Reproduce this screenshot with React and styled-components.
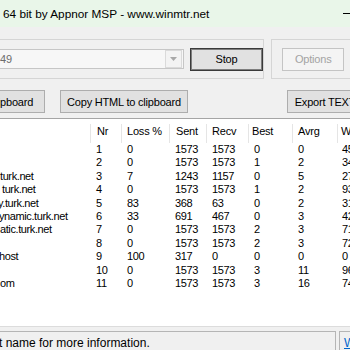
import React from 'react';
import styled, { createGlobalStyle } from 'styled-components';

const GlobalStyle = createGlobalStyle`
  html, body {
    margin: 0;
    padding: 0;
    background: #f0f0f0;
  }
  body {
    width: 350px;
    height: 350px;
    overflow: hidden;
  }
`;

const Window = styled.div`
  width: 350px;
  height: 350px;
  overflow: hidden;
  display: flex;
  flex-direction: column;
  background: #f0f0f0;
  font-family: "Liberation Sans", Arial, sans-serif;
  font-size: 11px;
  color: #000;
`;

const TitleBar = styled.div`
  flex: none;
  height: 27px;
  padding-left: 3px;
  display: flex;
  align-items: center;
  justify-content: space-between;
  background: #e9f6e9;
  font-family: "Liberation Sans", Arial, sans-serif;
  font-size: 11.8px;
  color: #000;
`;

const Minimize = styled.span`
  width: 10px;
  height: 1px;
  margin-right: -3px;
  background: #000;
`;

const TopRow = styled.div`
  flex: none;
  display: flex;
  gap: 7px;
  margin-top: 12px;
`;

const GroupBox = styled.div`
  box-sizing: border-box;
  height: 40px;
  display: flex;
  align-items: center;
  gap: 6px;
  border: 1px solid #d5d5d5;
  border-left: ${p => (p.$open === 'left' ? 'none' : '1px solid #d5d5d5')};
  border-right: ${p => (p.$open === 'right' ? 'none' : '1px solid #d5d5d5')};
  width: ${p => p.$width}px;
  padding-left: ${p => p.$padLeft || 0}px;
`;

const Combo = styled.div`
  box-sizing: border-box;
  width: 184px;
  height: 20px;
  display: flex;
  align-items: center;
  justify-content: space-between;
  border: 1px solid #c6c6c6;
  border-left: none;
  background: #f7f7f7;
  color: #6d6d6d;
  padding-right: 1px;
`;

const ComboArrow = styled.div`
  box-sizing: border-box;
  width: 17px;
  height: 18px;
  display: flex;
  align-items: center;
  justify-content: center;
  border: 1px solid #dadada;
  background: #f3f3f3;
`;

const Button = styled.div`
  box-sizing: border-box;
  flex: none;
  height: 23px;
  width: ${p => p.$width}px;
  margin-left: ${p => p.$shift || 0}px;
  display: flex;
  align-items: center;
  justify-content: center;
  white-space: nowrap;
  letter-spacing: -0.2px;
  background: ${p => (p.$disabled ? '#f4f4f4' : '#e1e1e1')};
  color: ${p => (p.$disabled ? '#a3a3a3' : '#000')};
  border: 1px solid ${p => (p.$default ? '#3a3a3a' : p.$disabled ? '#c4c4c4' : '#adadad')};
  box-shadow: ${p => (p.$default ? 'inset 0 0 0 1px #7d7d7d' : 'none')};
`;

const ButtonRow = styled.div`
  flex: none;
  display: flex;
  gap: 15px;
  margin-top: 11px;
`;

const ListView = styled.div`
  flex: 1;
  margin-top: 5px;
  background: #fff;
  border-top: 1px solid #a5a5a5;
  border-bottom: 1px solid #dcdcdc;
  overflow: hidden;
  letter-spacing: -0.4px;
`;

const Grid = styled.div`
  display: grid;
  grid-template-columns: 91px 31px 48px 37px 42px 44px 45px 60px;
  height: ${p => (p.$header ? '24px' : '13.4px')};
  line-height: 13.4px;
  white-space: nowrap;
`;

const HeadCell = styled.div`
  display: flex;
  align-items: center;
  padding-top: 2px;
  padding-left: ${p => p.$pad}px;
  letter-spacing: -0.2px;
  background: linear-gradient(#e5e5e5, #e5e5e5) right 5px / 1px calc(100% - 5px) no-repeat;
`;

const Cell = styled.div`
  padding-left: ${p => p.$pad || 5}px;
  overflow: hidden;
`;

const HostCell = styled.div`
  overflow: hidden;
`;

const HostText = styled.span`
  display: inline-block;
  margin-left: ${p => p.$shift}px;
`;

const StatusBar = styled.div`
  flex: none;
  height: 23px;
  box-sizing: border-box;
  padding-top: 4px;
  display: flex;
  gap: 3px;
  font-size: 12px;
`;

const StatusPanel = styled.div`
  box-sizing: border-box;
  width: ${p => p.$width}px;
  flex: none;
  padding-top: 4px;
  border-top: 1px solid #b5b5b5;
  border-left: ${p => (p.$first ? 'none' : '1px solid #b5b5b5')};
  border-right: 1px solid #b5b5b5;
  white-space: nowrap;
  overflow: hidden;
`;

const StatusText = styled.span`
  display: inline-block;
  margin-left: -1px;
`;

const Link = styled.span`
  display: inline-block;
  margin-left: 4px;
  color: #0066cc;
  text-decoration: underline;
`;

const columns = [
  { label: 'Nr', pad: 6 },
  { label: 'Loss %', pad: 5 },
  { label: 'Sent', pad: 6 },
  { label: 'Recv', pad: 5 },
  { label: 'Best', pad: 3 },
  { label: 'Avrg', pad: 5 },
  { label: 'Wrst', pad: 3 },
];

const rows = [
  { host: '', shift: 0, v: [1, 0, 1573, 1573, 0, 0, 45] },
  { host: '', shift: 0, v: [2, 0, 1573, 1573, 1, 2, 34] },
  { host: 'turk.net', shift: 0, v: [3, 7, 1243, 1157, 0, 5, 27] },
  { host: 'turk.net', shift: 2, v: [4, 0, 1573, 1573, 1, 2, 93] },
  { host: 'y.turk.net', shift: -2, v: [5, 83, 368, 63, 0, 2, 31] },
  { host: 'ynamic.turk.net', shift: -1, v: [6, 33, 691, 467, 0, 3, 42] },
  { host: 'atic.turk.net', shift: 0, v: [7, 0, 1573, 1573, 2, 3, 71] },
  { host: '', shift: 0, v: [8, 0, 1573, 1573, 2, 3, 72] },
  { host: 'host', shift: -1, v: [9, 100, 317, 0, 0, 0, 0] },
  { host: '', shift: 0, v: [10, 0, 1573, 1573, 3, 11, 96] },
  { host: 'om', shift: 0, v: [11, 0, 1573, 1573, 3, 16, 74] },
];

function App() {
  return (
    <Window>
      <GlobalStyle />
      <TitleBar>
        <span>64 bit by Appnor MSP - www.winmtr.net</span>
        <Minimize />
      </TitleBar>

      <TopRow>
        <GroupBox $open="left" $width={269}>
          <Combo>
            <span>49</span>
            <ComboArrow>
              <svg width="7" height="4" viewBox="0 0 7 4">
                <path d="M0 0h7L3.5 4z" fill="#a8a8a8" />
              </svg>
            </ComboArrow>
          </Combo>
          <Button $width={73} $default>Stop</Button>
        </GroupBox>
        <GroupBox $open="right" $width={80} $padLeft={10}>
          <Button $width={62} $disabled>Options</Button>
        </GroupBox>
      </TopRow>

      <ButtonRow>
        <Button $width={128} $shift={-83}>Copy Text to clipboard</Button>
        <Button $width={128}>Copy HTML to clipboard</Button>
        <Button $width={76} $shift={84}>Export TEXT</Button>
      </ButtonRow>

      <ListView>
        <Grid $header>
          <HeadCell $pad={0} />
          {columns.map(c => (
            <HeadCell key={c.label} $pad={c.pad}>{c.label}</HeadCell>
          ))}
        </Grid>
        {rows.map(r => (
          <Grid key={r.v[0]}>
            <HostCell>
              <HostText $shift={r.shift}>{r.host}</HostText>
            </HostCell>
            {r.v.map((val, i) => (
              <Cell key={i} $pad={i === 6 ? 4 : 5}>{val}</Cell>
            ))}
          </Grid>
        ))}
      </ListView>

      <StatusBar>
        <StatusPanel $first $width={336}>
          <StatusText>t name for more information.</StatusText>
        </StatusPanel>
        <StatusPanel $width={40}>
          <Link>WinMTR</Link>
        </StatusPanel>
      </StatusBar>
    </Window>
  );
}

export default App;
